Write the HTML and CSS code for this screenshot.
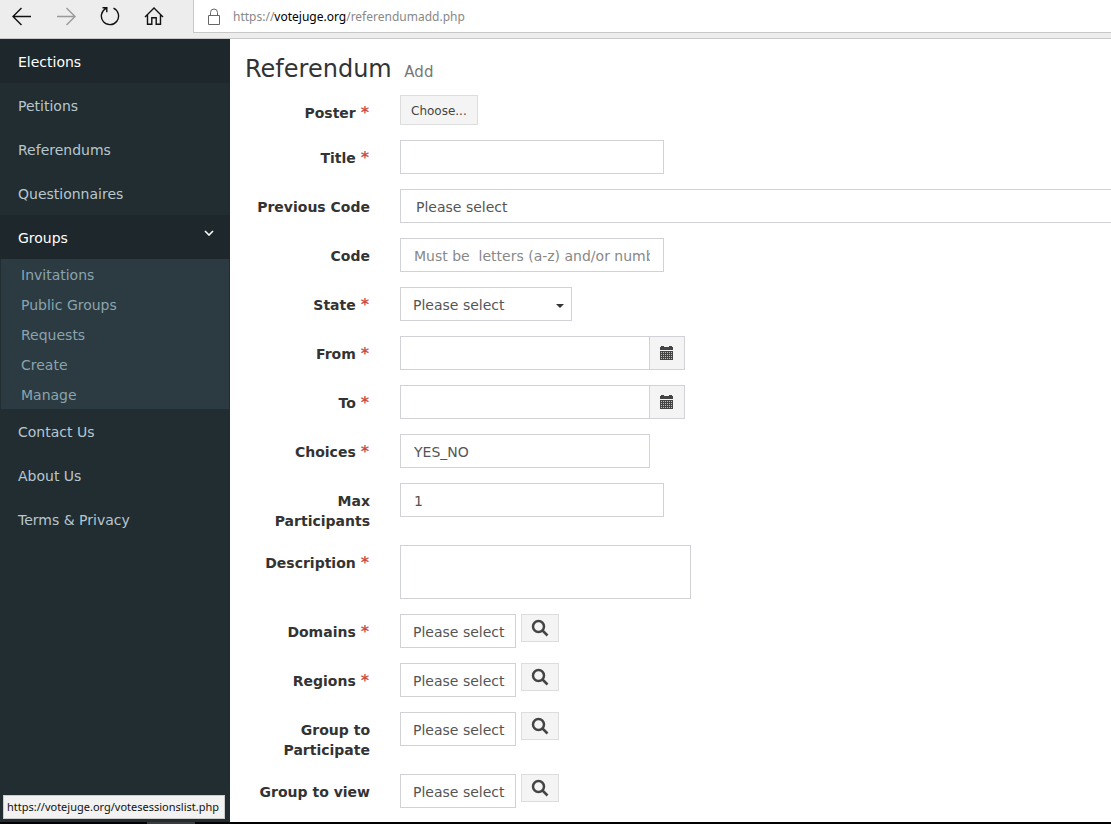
FILE: index.html
```html
<!DOCTYPE html>
<html lang="en">
<head>
    <meta charset="UTF-8">
    <meta name="viewport" content="width=device-width, initial-scale=1.0">
    <title>Referendum Add</title>
    <link rel="stylesheet" href="styles.css">
</head>
<body>
    <header class="toolbar">
        <nav class="toolbar-nav" aria-label="Browser">
            <button type="button" aria-label="Back">
                <svg width="20" height="20" viewBox="0 0 20 20"><path d="M19 10.500H1M9.500 2L1 10.500l8.500 8.500"/></svg>
            </button>
            <button type="button" class="inactive" aria-label="Forward">
                <svg width="20" height="20" viewBox="0 0 20 20"><path d="M1 10.500h18M10.500 2l8.500 8.500-8.500 8.500"/></svg>
            </button>
            <button type="button" aria-label="Refresh">
                <svg width="20" height="20" viewBox="0 0 20 20"><path d="M13.500 2.200A8.600 8.600 0 1 1 6 2.400M2.500 1.700h4.300v4.500"/></svg>
            </button>
            <button type="button" aria-label="Home">
                <svg width="20" height="20" viewBox="0 0 20 20"><path d="M1 11l9-9 9 9M3.500 9v9.300h4.300v-6.500h4.400v6.500h4.300V9"/></svg>
            </button>
        </nav>
        <div class="address">
            <svg class="lock" width="14" height="18" viewBox="0 0 14 18"><path d="M1.500 7.500h11v9h-11zM3.500 7.500V4.500a3.500 3.500 0 0 1 7 0v3"/></svg>
            <span>https://<b>votejuge.org</b>/referendumadd.php</span>
        </div>
    </header>

    <div class="page">
        <aside class="sidebar">
            <ul class="menu">
                <li><a class="active" href="#">Elections</a></li>
                <li><a href="#">Petitions</a></li>
                <li><a href="#">Referendums</a></li>
                <li><a href="#">Questionnaires</a></li>
                <li>
                    <a class="active" href="#">Groups
                        <svg class="chevron" width="10" height="6" viewBox="0 0 10 6"><path d="M1 1l4 4 4-4"/></svg>
                    </a>
                    <ul class="submenu">
                        <li><a href="#">Invitations</a></li>
                        <li><a href="#">Public Groups</a></li>
                        <li><a href="#">Requests</a></li>
                        <li><a href="#">Create</a></li>
                        <li><a href="#">Manage</a></li>
                    </ul>
                </li>
                <li><a href="#">Contact Us</a></li>
                <li><a href="#">About Us</a></li>
                <li><a href="#">Terms &amp; Privacy</a></li>
            </ul>
        </aside>

        <main class="content">
            <h1>Referendum <small>Add</small></h1>
            <form class="form">
                <div class="row">
                    <label for="poster">Poster <i>*</i></label>
                    <div><button type="button" id="poster" class="btn btn-file">Choose...</button></div>
                </div>
                <div class="row">
                    <label for="title">Title <i>*</i></label>
                    <div><input type="text" id="title" class="control"></div>
                </div>
                <div class="row">
                    <label for="previous">Previous Code</label>
                    <div><select id="previous" class="control wide"><option>Please select</option></select></div>
                </div>
                <div class="row">
                    <label for="code">Code</label>
                    <div><input type="text" id="code" class="control" placeholder="Must be  letters (a-z) and/or numbers (0-9)"></div>
                </div>
                <div class="row">
                    <label for="state">State <i>*</i></label>
                    <div class="select-wrap">
                        <select id="state" class="control"><option>Please select</option></select>
                    </div>
                </div>
                <div class="row">
                    <label for="from">From <i>*</i></label>
                    <div class="group">
                        <input type="text" id="from" class="control">
                        <button type="button" class="btn btn-date" aria-label="Pick start date">
                            <svg width="14" height="14" viewBox="0 0 14 14"><path d="M0 1h1V0h3v1h5V0h3v1h1v3H0zM0 5h13v9H0z"/><path class="grid" d="M1 6.500h11M1 8.500h11M1 10.500h11M1 12.500h11"/></svg>
                        </button>
                    </div>
                </div>
                <div class="row">
                    <label for="to">To <i>*</i></label>
                    <div class="group">
                        <input type="text" id="to" class="control">
                        <button type="button" class="btn btn-date" aria-label="Pick end date">
                            <svg width="14" height="14" viewBox="0 0 14 14"><path d="M0 1h1V0h3v1h5V0h3v1h1v3H0zM0 5h13v9H0z"/><path class="grid" d="M1 6.500h11M1 8.500h11M1 10.500h11M1 12.500h11"/></svg>
                        </button>
                    </div>
                </div>
                <div class="row">
                    <label for="choices">Choices <i>*</i></label>
                    <div><input type="text" id="choices" class="control medium" value="YES_NO"></div>
                </div>
                <div class="row">
                    <label for="max">Max Participants</label>
                    <div><input type="text" id="max" class="control" value="1"></div>
                </div>
                <div class="row">
                    <label for="description">Description <i>*</i></label>
                    <div><textarea id="description" class="control"></textarea></div>
                </div>
                <div class="row">
                    <label for="domains">Domains <i>*</i></label>
                    <div class="lookup">
                        <button type="button" id="domains" class="control">Please select</button>
                        <button type="button" class="btn btn-search" aria-label="Search domains">
                            <svg width="18" height="18" viewBox="0 0 18 18"><circle cx="7.500" cy="7.500" r="5.500"/><path d="M11.500 11.500l5 5"/></svg>
                        </button>
                    </div>
                </div>
                <div class="row">
                    <label for="regions">Regions <i>*</i></label>
                    <div class="lookup">
                        <button type="button" id="regions" class="control">Please select</button>
                        <button type="button" class="btn btn-search" aria-label="Search regions">
                            <svg width="18" height="18" viewBox="0 0 18 18"><circle cx="7.500" cy="7.500" r="5.500"/><path d="M11.500 11.500l5 5"/></svg>
                        </button>
                    </div>
                </div>
                <div class="row">
                    <label for="participate">Group to Participate</label>
                    <div class="lookup">
                        <button type="button" id="participate" class="control">Please select</button>
                        <button type="button" class="btn btn-search" aria-label="Search groups to participate">
                            <svg width="18" height="18" viewBox="0 0 18 18"><circle cx="7.500" cy="7.500" r="5.500"/><path d="M11.500 11.500l5 5"/></svg>
                        </button>
                    </div>
                </div>
                <div class="row">
                    <label for="view">Group to view</label>
                    <div class="lookup">
                        <button type="button" id="view" class="control">Please select</button>
                        <button type="button" class="btn btn-search" aria-label="Search groups to view">
                            <svg width="18" height="18" viewBox="0 0 18 18"><circle cx="7.500" cy="7.500" r="5.500"/><path d="M11.500 11.500l5 5"/></svg>
                        </button>
                    </div>
                </div>
            </form>
        </main>
    </div>

    <footer class="taskbar"><span></span></footer>
    <div class="status">https://votejuge.org/votesessionslist.php</div>
</body>
</html>
```
FILE: styles.css
```css
* {
    box-sizing: border-box;
}

body {
    display: flex;
    flex-direction: column;
    min-height: 100vh;
    margin: 0;
    background-color: #fff;
    color: #333;
    font-family: Verdana, "DejaVu Sans", sans-serif;
    font-size: 14px;
    line-height: 20px;
}

/* browser bar */
.toolbar {
    display: flex;
    height: 39px;
    padding-bottom: 5px;
    background-color: #ededed;
    border-bottom: 1px solid #c8c8c8;
}

.toolbar-nav {
    display: flex;
    gap: 24px;
    width: 193px;
    padding: 6px 0 0 12px;
}

.toolbar-nav button {
    width: 20px;
    height: 20px;
    padding: 0;
    border: none;
    background: none;
}

.toolbar svg {
    display: block;
    fill: none;
    stroke: #111;
    stroke-width: 1.4;
}

.toolbar .inactive svg {
    stroke: #999;
}

.address {
    display: flex;
    flex: 1;
    align-items: center;
    gap: 12px;
    padding: 1px 0 0 13px;
    background-color: #fff;
    border-left: 1px solid #c8c8c8;
    border-bottom: 1px solid #c8c8c8;
    color: #888;
    font-family: "Segoe UI", "Noto Sans", sans-serif;
    font-size: 12px;
}

.address b {
    color: #000;
    font-weight: normal;
}

.toolbar .lock {
    stroke: #666;
    stroke-width: 1;
}

.page {
    display: flex;
    flex: 1;
}

/* sidebar */
.sidebar {
    flex: none;
    width: 230px;
    background-color: #222d32;
}

.menu, .submenu {
    margin: 0;
    padding: 0;
    list-style: none;
}

.menu a {
    display: flex;
    justify-content: space-between;
    padding: 13px 16px 11px 18px;
    color: #b8c7ce;
    text-decoration: none;
}

.menu a.active {
    background-color: #1e282c;
    color: #fff;
}

.chevron {
    margin-top: 2px;
    fill: none;
    stroke: #fff;
    stroke-width: 1.6;
}

.submenu {
    margin: 0 1px;
    background-color: #2c3b41;
}

.menu .submenu a {
    padding: 6px 20px 4px;
    color: #8aa4af;
}

/* form */
.content {
    flex: 1;
    min-width: 0;
    padding: 15px 0 14px 15px;
}

h1 {
    margin: 0 0 8px;
    font-size: 24px;
    font-weight: normal;
    line-height: 30px;
}

h1 small {
    margin-left: 5px;
    color: #777;
    font-size: 15px;
}

.form {
    display: grid;
    gap: 15px;
}

.row {
    display: grid;
    grid-template-columns: 125px 1fr;
    column-gap: 30px;
}

label {
    padding-top: 8px;
    margin-bottom: -1px;
    font-weight: bold;
    text-align: right;
}

label i {
    margin-right: 1px;
    color: #c9504a;
    font-size: 16px;
    font-style: normal;
    line-height: 1;
}

.control {
    display: block;
    width: 264px;
    height: 34px;
    padding: 7px 13px 5px;
    border: 1px solid #d0d2d6;
    border-radius: 0;
    background-color: #fff;
    color: #555;
    font: inherit;
    appearance: none;
}

.control::placeholder {
    color: #888;
    opacity: 1;
}

.control.wide {
    width: 100%;
    padding-left: 15px;
    border-right: none;
}

.control.medium {
    width: 250px;
}

.select-wrap {
    position: relative;
    width: 172px;
}

.select-wrap .control {
    width: 100%;
    padding: 7px 12px 5px;
}

.select-wrap::after {
    content: "";
    position: absolute;
    top: 17px;
    right: 8px;
    border: 4px solid transparent;
    border-top-color: #333;
    border-bottom: none;
    pointer-events: none;
}

textarea.control {
    width: 291px;
    height: 54px;
    resize: none;
}

.group {
    display: flex;
}

.group .control {
    width: 250px;
}

.btn {
    display: flex;
    align-items: center;
    justify-content: center;
    padding: 0;
    border: 1px solid #ddd;
    background-color: #f4f4f4;
    color: #444;
    font: inherit;
    cursor: pointer;
}

.btn-file {
    height: 30px;
    padding: 1px 10px 0;
    font-size: 12px;
}

.btn-date {
    width: 35px;
    height: 34px;
    border-color: #d0d2d6;
    border-left: none;
}

.btn-date svg {
    fill: #444;
}

.btn-date .grid {
    fill: none;
    stroke: #bbb;
    stroke-dasharray: 1 1;
}

.lookup {
    display: flex;
    align-items: flex-start;
    gap: 5px;
}

.lookup .control {
    width: 116px;
    padding: 7px 0 5px 12px;
    text-align: left;
    white-space: nowrap;
}

.btn-search {
    width: 38px;
    height: 28px;
}

.btn-search svg {
    fill: none;
    stroke: #444;
    stroke-width: 2.5;
}

/* bottom edge */
.taskbar {
    height: 2px;
    padding-left: 147px;
    background-color: #000;
}

.taskbar span {
    display: block;
    width: 48px;
    height: 2px;
    background-color: #3c3c3c;
}

.status {
    position: fixed;
    left: 3px;
    bottom: 5px;
    min-width: 222px;
    padding: 1px 3px;
    border: 1px solid #ccc;
    background-color: #f2f2f2;
    color: #111;
    font-family: "Segoe UI", "Noto Sans", sans-serif;
    font-size: 11px;
}

@media (max-width: 600px) {
    .sidebar {
        display: none;
    }
}
```
